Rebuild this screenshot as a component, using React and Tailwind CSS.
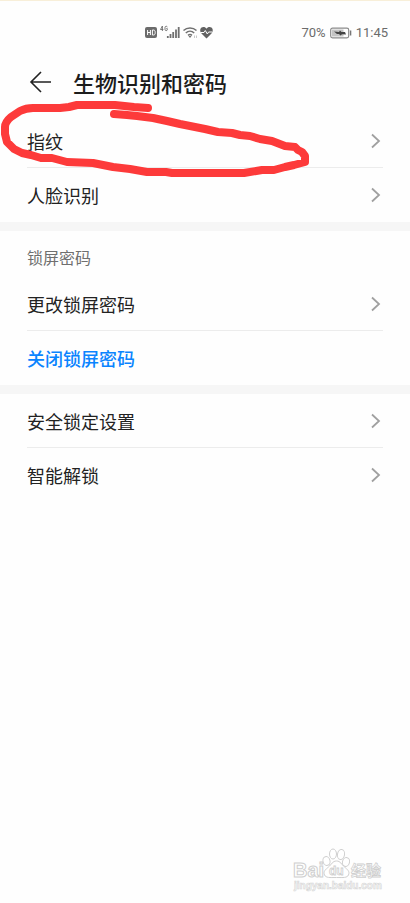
import React from 'react'

const groups = [
  {
    id: 'biometrics',
    items: [{ label: '指纹' }, { label: '人脸识别' }]
  },
  {
    id: 'lock',
    title: '锁屏密码',
    items: [{ label: '更改锁屏密码' }, { label: '关闭锁屏密码', action: true }]
  },
  {
    id: 'security',
    items: [{ label: '安全锁定设置' }, { label: '智能解锁' }]
  }
]

const StatusBar = () => (
  <div className="flex h-16 items-center border-t border-[#f8efd9] pl-[145px] pr-[22px] text-[#6b6b6b]">
    <svg className="h-4 w-[70px]" viewBox="0 0 70 16" fill="none">
      <rect x="0" y="2" width="12" height="11" rx="2" fill="#6b6b6b" />
      <path
        d="M2.6 5v5M5.4 5v5M2.6 7.5h2.8M7.4 5v5M7.400 5h1c1.4 0 1.8 1 1.8 2.5s-.4 2.500-1.800 2.500h-1"
        stroke="#fff"
        strokeWidth="1"
      />
      <path d="M17.4 6V1L15.5 4.500H18.4M22.4 1.900c-.4-.9-2.400-.9-2.400.6v2c0 1.500 2.400 1.500 2.400 0V3.700h-1.200" stroke="#6b6b6b" strokeWidth=".9" />
      <path d="M22.800 13v-2M25.500 13V9M28.200 13V7M31 13V4.500M33.700 13V2" stroke="#6f6f6f" strokeWidth="1.800" />
      <path d="M38.500 5.500c3.600-3.400 9.400-3.400 13 0M40.800 8c2.400-2.200 6-2.200 8.400 0M43 10.300c1.200-1 2.800-1 4 0" stroke="#707070" strokeWidth="1.500" />
      <path d="M43.500 11h3L45 13z" fill="#707070" />
      <path d="M49.500 10.500V13M51.500 10.500V13" stroke="#bbb" strokeWidth=".8" />
      <path
        d="M61.500 13.500 56.500 8.500C54 5.500 55.500 2.100 58.400 2.100c1.400 0 2.400.7 3.100 1.700.7-1 1.700-1.700 3.100-1.700 2.900 0 4.400 3.400 1.900 6.400z"
        fill="#626262"
      />
      <path d="M55.500 7.500h3.500l1.300-2 2 3.500 1.300-2h3.500" stroke="#fff" strokeWidth="1" />
    </svg>
    <div className="ml-auto flex items-center gap-1 font-[Roboto,sans-serif] text-[13px]">
      <span>70%</span>
      <svg className="h-3 w-[22px]" viewBox="0 0 22 12" fill="none">
        <rect x=".7" y="1.200" width="18" height="9.600" rx="1.800" stroke="#8a8a8a" strokeWidth="1.200" />
        <rect x="2" y="2.500" width="11.500" height="7" fill="#c4c4c4" />
        <path d="M4 4.500l5 .5 1-1.500 1.500 1.500h3.500l1 2.500-4-.2-1.500 1.200-1.500-1.500H7z" fill="#444" />
        <path d="M20.600 3.500v5" stroke="#777" strokeWidth="1.400" />
      </svg>
      <span>11:45</span>
    </div>
  </div>
)

const Chevron = () => (
  <svg className="h-4 w-3" viewBox="0 0 12 16" fill="none">
    <path d="M2 1.500 9 8l-7 6.500" stroke="#a0a0a0" strokeWidth="1.800" />
  </svg>
)

const Row = ({ item, last }) => (
  <li className={`h-[54px] ${last ? '' : 'border-b border-[#ececec]'}`}>
    <button
      type="button"
      className={`flex h-full w-full items-center justify-between pr-px text-left text-lg ${
        item.action ? 'font-medium text-[#0a84ff]' : 'text-[#222]'
      }`}
    >
      {item.label}
      {!item.action && <Chevron />}
    </button>
  </li>
)

// Hand-drawn loop around the first entry
const Marker = () => (
  <svg
    className="pointer-events-none absolute left-0 top-[100px] h-20 w-[312px]"
    viewBox="0 100 312 80"
    fill="none"
    stroke="#fd3a3a"
    strokeWidth="8"
    strokeLinecap="round"
    strokeLinejoin="round"
  >
    <path d="M148 108 134 107 115 105 77 105 69 107 60 108 33 108Q26 108 20 111L11 117Q5 122 5 127V134L7 142 14 149 22 153 31 155 41 158 52 158 67 162 93 163 113 167 130 169 147 172 166 172 172 173H244L262 170 274 170 285 167 294 165 305 162V156L302 152 298 150 295 147 285 146 272 141 260 139 250 136 240 135 232 133 218 132 205 129 190 126 180 124 167 121 153 118 137 116 127 115 114 114" />
  </svg>
)

const Watermark = () => (
  <svg
    className="mt-auto mb-2 mr-6 h-12 w-24 self-end"
    viewBox="0 0 96 48"
    fill="#fff"
    stroke="#cfcfcf"
    strokeWidth="1"
    fontFamily='"Liberation Sans", "Noto Sans CJK SC", sans-serif'
    fontWeight="700"
  >
    <text x="3" y="30" fontSize="20">Bai</text>
    <ellipse cx="36.500" cy="14" rx="3.500" ry="4.500" transform="rotate(-15 36.500 14)" />
    <ellipse cx="43" cy="7" rx="3.500" ry="5" />
    <ellipse cx="51" cy="7.500" rx="3.500" ry="5" transform="rotate(10 51 7.500)" />
    <ellipse cx="56" cy="15" rx="3.500" ry="4.500" transform="rotate(15 56 15)" />
    <path d="M46.500 14c-4 0-5 3.500-8 6-3 2.500-5.500 4.500-4 8 1.500 3 5 2.500 12 2.500s10.500.5 12-2.500c1.500-3.500-1-5.500-4-8-3-2.500-4-6-8-6z" />
    <text x="39" y="28" fontSize="12" fill="#fff" strokeWidth=".8">du</text>
    <text x="61" y="29" fontSize="15" strokeWidth=".8">经验</text>
    <text x="4" y="42" fontSize="10" fill="#fafafa" stroke="#d6d6d6" strokeWidth=".6">jingyan.baidu.com</text>
  </svg>
)

const App = () => {
  return (
    <div className="relative flex min-h-screen flex-col bg-[#fefefe] font-['Noto_Sans_CJK_SC',sans-serif]">
      <StatusBar />
      <header className="flex h-[50px] items-start gap-[22px] px-[27px]">
        <button type="button" aria-label="返回" className="flex h-9 items-center">
          <svg className="h-6 w-6" viewBox="0 0 24 24" fill="none">
            <path d="M14 2 4 12l10 10M4 12h20" stroke="#222" strokeWidth="1.600" />
          </svg>
        </button>
        <h1 className="text-[22px] font-medium leading-9 text-[#1c1c1c]">生物识别和密码</h1>
      </header>
      <main>
        {groups.map((group, index) => (
          <section
            key={group.id}
            className={`px-[27px] ${index > 0 ? 'border-t-[9px] border-[#f6f6f6]' : ''}`}
          >
            {group.title && (
              <h2 className="h-[46px] pt-3 text-base leading-7 text-[#6f6f6f]">{group.title}</h2>
            )}
            <ul>
              {group.items.map((item, i) => (
                <Row key={item.label} item={item} last={i === group.items.length - 1} />
              ))}
            </ul>
          </section>
        ))}
      </main>
      <Marker />
      <Watermark />
    </div>
  )
}

export default App
